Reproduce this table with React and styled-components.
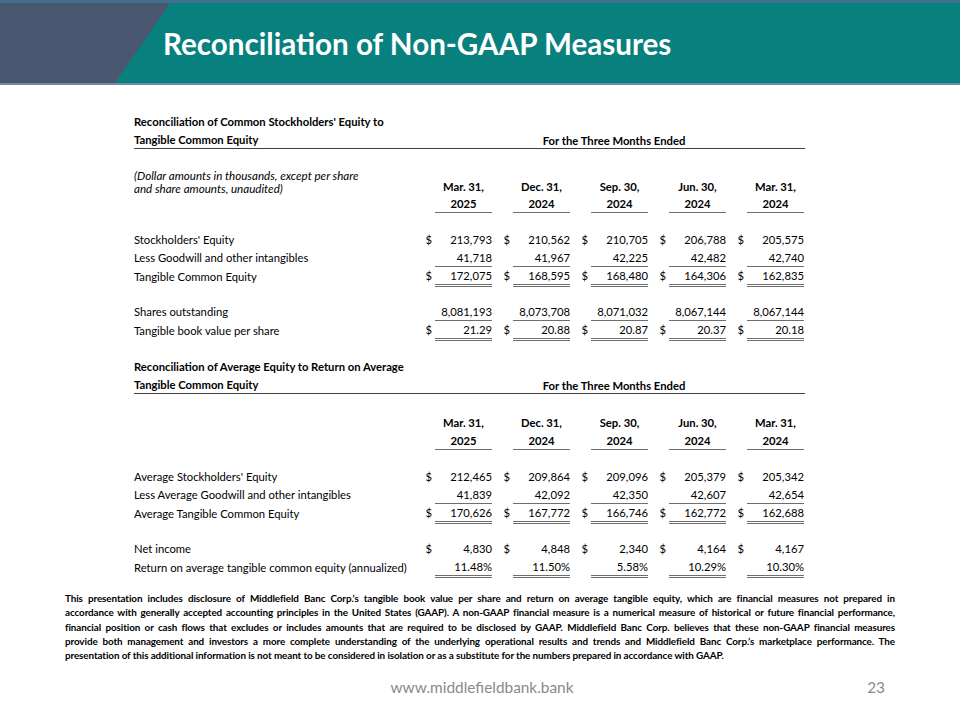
import React from 'react'
import styled, { createGlobalStyle } from 'styled-components'

const GlobalStyle = createGlobalStyle`
  html, body {
    margin: 0;
    padding: 0;
    background: #ffffff;
  }
  body {
    font-family: Lato, "Open Sans", sans-serif;
    color: #000000;
  }
`

const Page = styled.div`
  width: 960px;
  height: 720px;
  display: flex;
  flex-direction: column;
  overflow: hidden;
`

const Header = styled.header`
  height: 80px;
  display: flex;
  align-items: center;
  background: #08807e;
  border-top: 3px solid #3f6f8c;
  border-bottom: 2px solid #6a8cab;
`

const Slate = styled.div`
  width: 170px;
  align-self: stretch;
  background: #4b5770;
  clip-path: polygon(0 0, 100% 0, 67.6% 100%, 0 100%);
`

const Title = styled.h1`
  margin: 0 0 0 -7px;
  font-size: 29.6px;
  font-weight: 700;
  color: #ffffff;
`

const Table = styled.div`
  margin: 28px 0 0 134px;
  width: 671px;
  font-size: 11.25px;
`

const Row = styled.div`
  display: grid;
  grid-template-columns: 280px repeat(5, 21px 57px);
  height: ${p => p.$h || 18}px;
  align-items: ${p => p.$align || 'center'};
  border-bottom: ${p => p.$rule ? '1px solid #404040' : 'none'};
  box-sizing: border-box;
`

const Label = styled.div`
  font-weight: ${p => p.$bold ? 700 : 400};
  font-style: ${p => p.$italic ? 'italic' : 'normal'};
  font-size: ${p => p.$italic ? '11.6px' : 'inherit'};
  line-height: ${p => p.$lh || 18}px;
  white-space: nowrap;
`

const Span = styled.div`
  grid-column: 2 / -1;
  text-align: center;
  font-weight: 700;
  padding-left: 10px;
`

const Dollar = styled.div`
  align-self: stretch;
  line-height: 17px;
  text-align: right;
  padding-right: 3px;
`

const Value = styled.div`
  align-self: ${p => p.$end ? 'end' : 'stretch'};
  line-height: 17px;
  text-align: ${p => p.$center ? 'center' : 'right'};
  font-weight: ${p => p.$bold ? 700 : 400};
  box-sizing: border-box;
  border-bottom: ${p => p.$line === 'double' ? '3px double #6e6e6e' : p.$line === 'single' ? '1px solid #6e6e6e' : 'none'};
`

const Note = styled.div`
  margin: 15px 65px 0 65px;
  font-size: 9.9px;
  line-height: 14.3px;
  letter-spacing: -0.1px;
  font-weight: 700;
`

// each line of the disclosure is justified to the full width, like the slide
const NoteLine = styled.div`
  white-space: nowrap;
  text-align: justify;
  text-align-last: ${p => p.$last ? 'left' : 'justify'};
`

const Footer = styled.footer`
  margin-top: 15px;
  display: grid;
  grid-template-columns: 1fr auto 1fr;
  align-items: center;
  color: #8a8a8a;
  font-size: 15.4px;
  height: 20px;
`

const Url = styled.span`
  grid-column: 2;
  padding-left: 4px;
`

const PageNum = styled.span`
  justify-self: end;
  padding-right: 75px;
`

const periods = [
  ['Mar. 31,', '2025'],
  ['Dec. 31,', '2024'],
  ['Sep. 30,', '2024'],
  ['Jun. 30,', '2024'],
  ['Mar. 31,', '2024'],
]

const section1 = [
  { label: "Stockholders' Equity", dollar: true, values: ['213,793', '210,562', '210,705', '206,788', '205,575'] },
  { label: 'Less Goodwill and other intangibles', line: 'single', values: ['41,718', '41,967', '42,225', '42,482', '42,740'] },
  { label: 'Tangible Common Equity', dollar: true, line: 'double', values: ['172,075', '168,595', '168,480', '164,306', '162,835'] },
  null,
  { label: 'Shares outstanding', line: 'single', values: ['8,081,193', '8,073,708', '8,071,032', '8,067,144', '8,067,144'] },
  { label: 'Tangible book value per share', dollar: true, line: 'double', values: ['21.29', '20.88', '20.87', '20.37', '20.18'] },
]

const section2 = [
  { label: "Average Stockholders' Equity", dollar: true, values: ['212,465', '209,864', '209,096', '205,379', '205,342'] },
  { label: 'Less Average Goodwill and other intangibles', line: 'single', values: ['41,839', '42,092', '42,350', '42,607', '42,654'] },
  { label: 'Average Tangible Common Equity', dollar: true, line: 'double', values: ['170,626', '167,772', '166,746', '162,772', '162,688'] },
  null,
  { label: 'Net income', dollar: true, values: ['4,830', '4,848', '2,340', '4,164', '4,167'] },
  { label: 'Return on average tangible common equity (annualized)', line: 'double', values: ['11.48%', '11.50%', '5.58%', '10.29%', '10.30%'] },
]

const disclosure = [
  'This presentation includes disclosure of Middlefield Banc Corp.’s tangible book value per share and return on average tangible equity, which are financial measures not prepared in',
  'accordance with generally accepted accounting principles in the United States (GAAP). A non-GAAP financial measure is a numerical measure of historical or future financial performance,',
  'financial position or cash flows that excludes or includes amounts that are required to be disclosed by GAAP. Middlefield Banc Corp. believes that these non-GAAP financial measures',
  'provide both management and investors a more complete understanding of the underlying operational results and trends and Middlefield Banc Corp.’s marketplace performance. The',
  'presentation of this additional information is not meant to be considered in isolation or as a substitute for the numbers prepared in accordance with GAAP.',
]

function DataRows({ rows }) {
  return rows.map((r, i) => {
    if (!r) return <Row key={i} />
    return (
      <Row key={i}>
        <Label>{r.label}</Label>
        {r.values.map((v, j) => (
          <React.Fragment key={j}>
            <Dollar>{r.dollar ? '$' : ''}</Dollar>
            <Value $line={r.line}>{v}</Value>
          </React.Fragment>
        ))}
      </Row>
    )
  })
}

function PeriodRow({ idx, label, italic, h }) {
  return (
    <Row $h={h} $align={italic ? 'end' : 'center'}>
      {italic ? (
        <Label $italic $lh={13}>{label}</Label>
      ) : (
        <Label>{label}</Label>
      )}
      {periods.map((p, j) => (
        <React.Fragment key={j}>
          <Dollar />
          <Value $center $bold $end={italic} $line={idx === 1 ? 'single' : undefined}>{p[idx]}</Value>
        </React.Fragment>
      ))}
    </Row>
  )
}

export default function App() {
  return (
    <Page>
      <GlobalStyle />
      <Header>
        <Slate />
        <Title>Reconciliation of Non-GAAP Measures</Title>
      </Header>

      <Table>
        <Row>
          <Label $bold>Reconciliation of Common Stockholders' Equity to</Label>
        </Row>
        <Row $rule>
          <Label $bold>Tangible Common Equity</Label>
          <Span>For the Three Months Ended</Span>
        </Row>
        <Row />
        <PeriodRow
          idx={0}
          italic
          h={28}
          label={<>(Dollar amounts in thousands, except per share<br />and share amounts, unaudited)</>}
        />
        <PeriodRow idx={1} />
        <Row />
        <DataRows rows={section1} />
        <Row $h={19} />
        <Row>
          <Label $bold>Reconciliation of Average Equity to Return on Average</Label>
        </Row>
        <Row $rule>
          <Label $bold>Tangible Common Equity</Label>
          <Span>For the Three Months Ended</Span>
        </Row>
        <Row $h={20} />
        <PeriodRow idx={0} />
        <PeriodRow idx={1} />
        <Row />
        <DataRows rows={section2} />
      </Table>

      <Note>
        {disclosure.map((line, i) => (
          <NoteLine key={i} $last={i === disclosure.length - 1}>{line}</NoteLine>
        ))}
      </Note>

      <Footer>
        <Url>www.middlefieldbank.bank</Url>
        <PageNum>23</PageNum>
      </Footer>
    </Page>
  )
}
